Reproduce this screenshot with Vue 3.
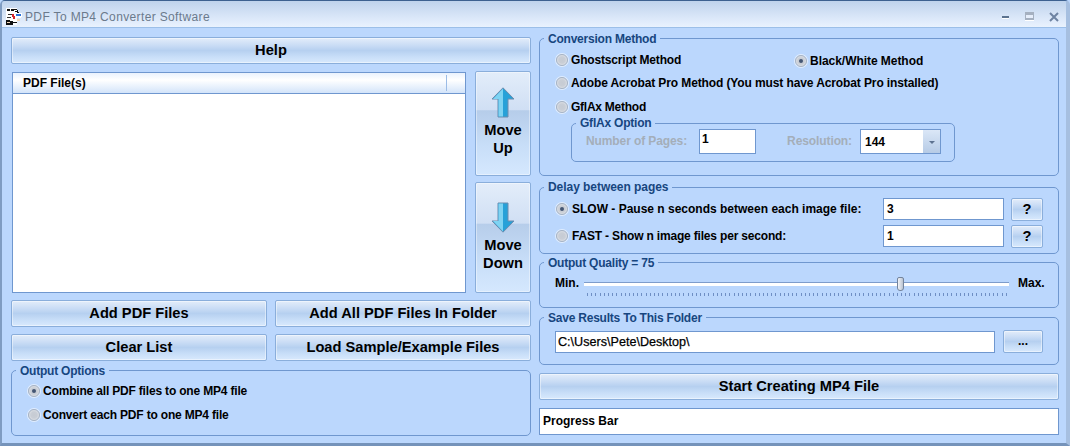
<script setup>
const qualityTicks = Array.from({ length: 101 }, (_, i) => i)
</script>

<template>
  <div class="window">
    <header class="titlebar">
      <svg class="app-icon" width="18" height="18" viewBox="0 0 18 18" shape-rendering="crispEdges">
        <rect x="1" y="0" width="11" height="17" fill="#fff" />
        <path d="M2 1h3v2H2zM6 1h3v2H6zM9 1h3v1H9zM12 2h1v2h1v2h-2V4h-2V3h2z" fill="#111" />
        <path d="M3 6h6v1H3zM2 9h4v1H2z" fill="#333" />
        <path d="M7 6h2v2h1v3H8V9H7z" fill="#d8232a" />
        <path d="M10 5h7v4h-1v1h-6z" fill="#fff" />
        <path d="M11 6h5v2h-5z" fill="#2a73d9" />
        <path d="M1 12h4v1h3v1h4v1H8v2H1z" fill="#111" />
        <path d="M2 14h3v1H2zM12 11h3v2h-3z" fill="#f4d8b8" />
      </svg>
      <span class="title-text">PDF To MP4 Converter Software</span>
      <div class="win-controls">
        <svg class="ctl-min" width="7" height="4" viewBox="0 0 7 4" shape-rendering="crispEdges"><rect width="7" height="2" y="1" fill="#5c7390" /><rect width="7" height="1" y="3" fill="#fff" /></svg>
        <svg class="ctl-max" width="9" height="9" viewBox="0 0 9 9" shape-rendering="crispEdges"><rect width="9" height="8" fill="#a5b0c0" /><rect x="1" y="3" width="7" height="3" fill="#e6eefb" /><rect y="8" width="9" height="1" fill="#fff" /></svg>
        <svg class="ctl-close" width="10" height="10" viewBox="0 0 10 10"><path d="M1 1l8 8M9 1l-8 8" stroke="#6e83a2" stroke-width="2" fill="none" /></svg>
      </div>
    </header>

    <main class="content">
      <section class="col">
        <button class="btn btn-help"><span>Help</span></button>
        <div class="list-row">
          <div class="list">
            <div class="list-head"><span>PDF File(s)</span></div>
          </div>
          <div class="move-col">
            <button class="btn-move up">
              <svg width="24" height="31" viewBox="0 0 24 31">
                <path d="M12 .8L23 12H17V30H7V12H1Z" fill="#27a1d8" stroke="#6d8cae" />
                <path d="M12 1.5L2 12H7.5V29.5H12Z" fill="#7fd3f2" />
              </svg>
              <span>Move<br />Up</span>
            </button>
            <button class="btn-move down">
              <svg width="24" height="31" viewBox="0 0 24 31">
                <path d="M12 30.2L23 19H17V1H7V19H1Z" fill="#27a1d8" stroke="#6d8cae" />
                <path d="M12 29.5L2 19H7.5V1.5H12Z" fill="#7fd3f2" />
              </svg>
              <span>Move<br />Down</span>
            </button>
          </div>
        </div>
        <div class="btn-grid">
          <button class="btn"><span>Add PDF Files</span></button>
          <button class="btn"><span>Add All PDF Files In Folder</span></button>
          <button class="btn"><span>Clear List</span></button>
          <button class="btn"><span>Load Sample/Example Files</span></button>
        </div>
        <fieldset class="group output-options">
          <legend class="low">Output Options</legend>
          <div class="body">
            <label class="radio-row tight"><i class="radio on"></i>Combine all PDF files to one MP4 file</label>
            <label class="radio-row tight"><i class="radio"></i>Convert each PDF to one MP4 file</label>
          </div>
        </fieldset>
      </section>

      <section class="col">
        <fieldset class="group conversion">
          <legend class="low">Conversion Method</legend>
          <div class="body">
            <div class="method-top">
              <label class="radio-row tight"><i class="radio"></i>Ghostscript Method</label>
              <label class="radio-row bw"><i class="radio on"></i>Black/White Method</label>
            </div>
            <label class="radio-row adobe"><i class="radio"></i>Adobe Acrobat Pro Method (You must have Acrobat Pro installed)</label>
            <label class="radio-row gflax-row"><i class="radio"></i>GflAx Method</label>
            <fieldset class="group gflax">
              <legend>GflAx Option</legend>
              <div class="body">
                <span class="muted pages-label">Number of Pages:</span>
                <div class="input pages-input">1</div>
                <span class="muted res-label">Resolution:</span>
                <div class="input select">144<b class="select-arrow"></b></div>
              </div>
            </fieldset>
          </div>
        </fieldset>

        <fieldset class="group delay">
          <legend class="wide">Delay between pages</legend>
          <div class="body">
            <div class="delay-row">
              <label class="radio-row slow"><i class="radio on"></i>SLOW - Pause n seconds between each image file:</label>
              <div class="input delay-input">3</div>
              <button class="btn btn-small"><span>?</span></button>
            </div>
            <div class="delay-row">
              <label class="radio-row slow tight"><i class="radio"></i>FAST - Show n image files per second:</label>
              <div class="input delay-input">1</div>
              <button class="btn btn-small"><span>?</span></button>
            </div>
          </div>
        </fieldset>

        <fieldset class="group quality">
          <legend class="low">Output Quality = 75</legend>
          <div class="body">
            <span class="end-label">Min.</span>
            <div class="slider">
              <div class="track"></div>
              <div class="thumb"></div>
              <div class="ticks"><i v-for="t in qualityTicks" :key="t"></i></div>
            </div>
            <span class="end-label">Max.</span>
          </div>
        </fieldset>

        <fieldset class="group save">
          <legend class="low">Save Results To This Folder</legend>
          <div class="body">
            <div class="input path">C:\Users\Pete\Desktop\</div>
            <button class="btn btn-browse"><span>...</span></button>
          </div>
        </fieldset>

        <button class="btn btn-start"><span>Start Creating MP4 File</span></button>
        <div class="progress">Progress Bar</div>
      </section>
    </main>
  </div>
</template>

<style>
html, body { margin: 0; background: #bbd7fd; }
</style>

<style scoped>
* { box-sizing: border-box; }
.window {
  width: 1070px; height: 446px; overflow: hidden;
  background: #bbd7fd;
  font: bold 12px "Liberation Sans", Arial, sans-serif;
  color: #000;
  display: flex; flex-direction: column;
  border-left: 2px solid #7f9cc2;
  border-right: 4px solid #a6bfe0;
  border-top: 1px solid #3d6190;
  border-bottom: 3px solid #7593ba;
  border-radius: 5px 5px 0 0;
}
.titlebar {
  height: 27px; flex: none;
  display: flex; align-items: center;
  padding: 5px 7px 0 3px;
  background: linear-gradient(#bfd3ec, #d9e6f8 60%, #e9f2fe);
  border-bottom: 1px solid #9cbfe8;
}
.app-icon { flex: none; }
.title-text {
  margin-left: 2px;
  font: 12px "Liberation Sans", Arial, sans-serif;
  letter-spacing: .36px;
  color: #6b7a8c;
}
.win-controls { margin-left: auto; display: flex; align-items: center; }
.ctl-max { margin-left: 16px; }
.ctl-close { margin-left: 15px; }
.content {
  flex: 1;
  display: grid; grid-template-columns: 520px 520px; column-gap: 8px;
  padding: 9px 0 0 9px;
}
.col { display: flex; flex-direction: column; }
button { font-family: inherit; color: #000; cursor: default; }
.btn {
  font-size: 14.67px; font-weight: bold;
  border: 1px solid #8aaedb; border-radius: 2px; padding: 0 0 2px;
  background: linear-gradient(#e3edfa, #c9dcf5 30%, #b6d0f0 50%, #c8def8 75%, #d8e9fd);
  box-shadow: inset 0 0 0 1px rgba(255,255,255,.45);
}
.btn-help { height: 27px; flex: none; }
.list-row { display: flex; justify-content: space-between; margin-top: 7px; height: 222px; flex: none; }
.list { width: 454px; margin: 1px 0 0 1px; background: #fff; border: 1px solid #6f97cf; }
.list-head {
  height: 21px; padding: 3px 0 0 10px;
  background: linear-gradient(#eaf2fd, #fff 35%, #d3e4fa);
  border-bottom: 1px solid #6f97cf;
  position: relative;
}
.list-head::after {
  content: ""; position: absolute; right: 18px; top: 2px; height: 16px; width: 1px; background: #9cbce6;
}
.move-col { width: 56px; display: flex; flex-direction: column; justify-content: space-between; }
.btn-move {
  width: 56px; padding: 0;
  font-size: 14.67px; font-weight: bold; line-height: 18px;
  border: 1px solid #8aaedb; border-radius: 2px;
  display: flex; flex-direction: column; align-items: center;
  background: linear-gradient(#e3edfa, #d0dff4 37%, #b6cdea 37.5%, #c8def8 72%, #d5e8fe);
  box-shadow: inset 0 0 0 1px rgba(255,255,255,.4);
}
.btn-move svg { margin-left: -1px; }
.btn-move.up { height: 105px; padding-top: 15px; gap: 3px; }
.btn-move.down { height: 111px; padding-top: 19px; gap: 3px; }
.btn-grid {
  display: grid; grid-template-columns: 256px 256px; column-gap: 8px; row-gap: 7px;
  margin-top: 7px;
}
.btn-grid .btn { height: 27px; }

.group {
  margin: 0; padding: 0; min-width: 0;
  border: 1px solid #6f97cf; border-radius: 5px;
  flex: none;
}
legend {
  padding: 0 4px; margin-left: 4px;
  color: #17467f; font-weight: bold; line-height: 12px;
  letter-spacing: -.22px;
}
legend.low { padding-top: 1px; }
legend.wide { letter-spacing: -.05px; }
.radio-row { display: flex; align-items: center; white-space: nowrap; }
.radio {
  flex: none; width: 12px; height: 12px; margin-right: 3px; border-radius: 50%;
  border: 1px solid #a9b3c1;
  background: radial-gradient(circle at 50% 50%, #c6cbd3 0, #c9ced6 45%, #f1f3f6 100%);
  box-shadow: 0 0 0 1px rgba(255,255,255,.55);
  position: relative;
}
.radio.on::after {
  content: ""; position: absolute; left: 3px; top: 3px; width: 4px; height: 4px; border-radius: 50%; background: #445673;
}
.tight { letter-spacing: -.18px; }
.output-options { margin-top: 3px; height: 72px; }
.output-options .body { padding: 6px 0 0 16px; }
.output-options .radio-row { height: 16px; margin-bottom: 8px; }

.input {
  background: #fff; border: 1px solid #6f97cf;
  color: #000; font-size: 12px; font-weight: bold;
}
.conversion { height: 144px; margin-top: -5px; }
.conversion > .body { padding: 7px 0 0 16px; }
.method-top { display: flex; height: 16px; }
.bw { margin-left: 114px; margin-top: 1px; letter-spacing: -.05px; }
.adobe { margin-top: 7px; height: 16px; letter-spacing: -.11px; }
.gflax-row { margin-top: 8px; height: 16px; letter-spacing: -.25px; }
.gflax { width: 384px; height: 45px; margin: 2px 0 0 15px; }
.gflax .body { display: flex; align-items: flex-start; padding-left: 14px; }
.muted { color: #a4aeb9; line-height: 24px; letter-spacing: -.1px; }
.pages-input { width: 57px; height: 25px; margin-left: 12px; padding: 0 2px; line-height: 18px; }
.res-label { margin-left: 31px; }
.select { width: 81px; height: 25px; margin-left: 8px; padding-left: 4px; line-height: 25px; position: relative; }
.select-arrow {
  position: absolute; right: 0; top: 0; width: 17px; height: 23px;
  background: linear-gradient(#dbe7f7, #b6cbe6);
}
.select-arrow::after {
  content: ""; position: absolute; left: 6px; top: 11px;
  border: 3px solid transparent; border-top: 3px solid #5d7290; border-bottom: 0;
}
.delay { height: 73px; margin-top: 5px; }
.delay .body { padding: 5px 0 0 16px; }
.delay-row { display: flex; align-items: flex-start; height: 23px; margin-bottom: 4px; }
.slow { width: 327px; height: 21px; }
.slow .radio { margin-right: 4px; }
.delay-input { width: 121px; height: 22px; padding-left: 3px; line-height: 20px; }
.btn-small { width: 32px; height: 23px; margin-left: 7px; font-size: 14.67px; }
.quality { height: 52px; margin-top: 2px; }
.quality .body { display: flex; align-items: flex-start; padding: 7px 0 0 15px; }
.end-label { line-height: 14px; }
.slider { width: 425px; height: 28px; margin: 1px 9px 0 5px; position: relative; }
.track {
  position: absolute; left: 0; right: 0; top: 5px; height: 4px;
  background: #fff; border-top: 1px solid #7d9ccb;
}
.thumb {
  position: absolute; left: 313px; top: 0; width: 7px; height: 14px;
  background: linear-gradient(90deg, #f2f4f8, #b9c3d2);
  border: 1px solid #74849c; border-radius: 2px 2px 3px 3px;
}
.ticks { position: absolute; left: 3px; top: 16px; width: 420px; display: flex; justify-content: space-between; }
.ticks i { width: 1px; height: 3px; background: #6f8fc4; flex: none; }
.save { height: 54px; margin-top: 3px; }
.save .body { display: flex; align-items: flex-start; padding: 6px 0 0 15px; }
.path { width: 440px; height: 22px; margin-top: 1px; padding-left: 2px; line-height: 20px; font-weight: normal; font-size: 12.6px; -webkit-text-stroke: .25px #000; }
.btn-browse { width: 40px; height: 23px; margin-left: 8px; font-size: 12px; }
.btn-start { height: 27px; margin-top: 8px; flex: none; }
.progress {
  height: 27px; margin-top: 8px; padding-left: 3px; line-height: 25px;
  background: #fff; border: 1px solid #6f97cf;
  font-size: 12px;
}
</style>
